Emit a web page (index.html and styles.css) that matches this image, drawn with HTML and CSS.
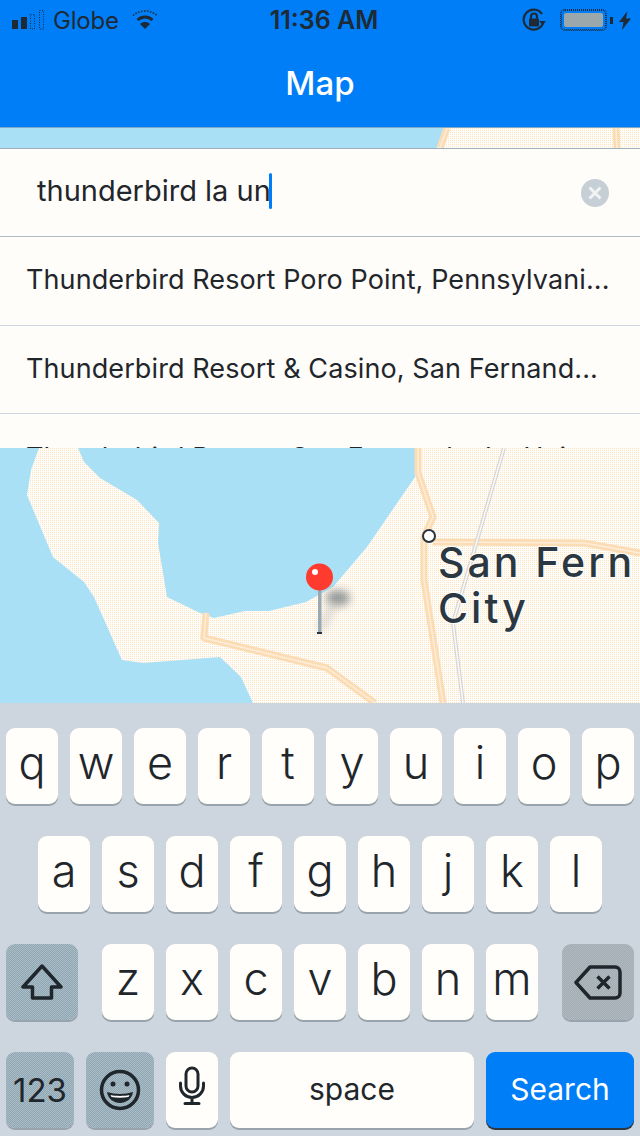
FILE: index.html
```html
<!doctype html>
<html lang="en">

<head>
	<meta charset="UTF-8">
	<title>Map</title>
	<link rel="stylesheet" href="styles.css">
</head>

<body>
	<header class="top">
		<div class="status">
			<div class="status-left">
				<svg class="signal" width="34" height="22" viewBox="0 0 34 22">
					<rect x="0" y="11" width="6" height="9" />
					<rect x="9" y="8" width="6" height="12" />
					<rect class="dotted" x="18.5" y="5.5" width="4" height="14.5" />
					<rect class="dotted" x="27.5" y="1.5" width="4" height="18.5" />
				</svg>
				<span class="carrier">Globe</span>
				<svg class="wifi" width="28" height="22" viewBox="0 0 28 22">
					<path class="wifi-outer" d="M2 6.5C9 .5 19 .5 26 6.5" />
					<path class="wifi-mid" d="M6.5 11C11 7 17 7 21.5 11" />
					<path class="wifi-low" d="M9 15C12 12.4 16 12.4 19 15L14 20Z" />
				</svg>
			</div>
			<span class="clock">11:36 AM</span>
			<div class="status-right">
				<svg class="rotlock" width="24" height="24" viewBox="0 0 24 24">
					<path class="ring" d="M21.5 13.5A10 10 0 1 1 20 6" />
					<path class="solid" d="M17 13h7l-3.5 4z" />
					<rect class="solid" x="7" y="10.5" width="10" height="8" rx="1" />
					<path class="shackle" d="M9 11V8.500a3 3 0 0 1 6 0V11" />
				</svg>
				<div class="battery"><div class="battery-fill"></div></div>
				<div class="battery-nub"></div>
				<svg class="bolt" width="12" height="19" viewBox="0 0 12 19">
					<path class="solid" d="M8.500 0L0 11h4.500L3 19l9-11.500H7z" />
				</svg>
			</div>
		</div>
		<h1 class="title">Map</h1>
	</header>

	<main class="stage">
		<svg class="map" viewBox="0 128 640 575" preserveAspectRatio="none">
			<defs>
				<pattern id="land" width="2" height="2" patternUnits="userSpaceOnUse">
					<rect width="2" height="2" fill="#fffdf9" />
					<rect width="1" height="1" fill="#fce3c2" />
				</pattern>
				<filter id="soft" x="-50%" y="-50%" width="200%" height="200%">
					<feGaussianBlur stdDeviation="4" />
				</filter>
			</defs>
			<rect class="water" x="0" y="128" width="640" height="575" />
			<path fill="url(#land)" d="M39 448L78 448L84 462L100 478L137 500L159 523L158 543L167 597L200 613L214 618L245 611L269 611L306 602L333 587L367 547L415 477L420 400L437 148L445 128L640 128L640 703L253 703L241 677L220 657L143 663L122 660L94 597L84 582L53 557L27 495L31 470Z" />

			<g class="road">
				<path d="M447 128L440 148M616 128L617 148" />
				<path d="M418 448L418 473L433 517L424 537L424 580L443 703" />
				<path d="M433 542L584 543L640 553" />
				<path d="M206 613L204 638L327 668L375 703" />
			</g>
			<g class="road-core">
				<path d="M447 128L440 148M616 128L617 148" />
				<path d="M418 448L418 473L433 517L424 537L424 580L443 703" />
				<path d="M433 542L584 543L640 553" />
				<path d="M206 613L204 638L327 668L375 703" />
			</g>
			<path class="rail" d="M504 448L453 623L463 703" />
			<path class="rail-core" d="M504 448L453 623L463 703" />

			<circle class="town" cx="429" cy="536" r="6" />
			<text class="place" x="438" y="577">San Fern</text>
			<text class="place" x="438" y="623">City</text>

			<ellipse class="pin-shadow" cx="338" cy="598" rx="12" ry="8" filter="url(#soft)" />
			<path class="pin-trail" d="M334 604L320 630" filter="url(#soft)" />
			<rect class="pin-stem" x="318" y="588" width="3.500" height="45" />
			<rect class="pin-tip" x="317" y="632" width="5" height="2" />
			<circle class="pin-head" cx="319.500" cy="577" r="13.500" />
			<circle class="pin-glint" cx="315" cy="572" r="3" />
		</svg>

		<section class="panel">
			<div class="search">
				<span class="query">thunderbird la un</span><span class="caret"></span>
				<svg class="clear" width="28" height="28" viewBox="0 0 28 28">
					<circle cx="14" cy="14" r="14" />
					<path d="M8.500 8.500L19.500 19.500M19.500 8.500L8.500 19.500" />
				</svg>
			</div>
			<div class="result">Thunderbird Resort Poro Point, Pennsylvani...</div>
			<div class="result">Thunderbird Resort &amp; Casino, San Fernand...</div>
			<div class="result">Thunderbird Resort, San Fernando, La Union</div>
		</section>
	</main>

	<section class="keyboard">
		<div class="row">
			<div class="key">q</div>
			<div class="key">w</div>
			<div class="key">e</div>
			<div class="key">r</div>
			<div class="key">t</div>
			<div class="key">y</div>
			<div class="key">u</div>
			<div class="key">i</div>
			<div class="key">o</div>
			<div class="key">p</div>
		</div>
		<div class="row row-center">
			<div class="key">a</div>
			<div class="key">s</div>
			<div class="key">d</div>
			<div class="key">f</div>
			<div class="key">g</div>
			<div class="key">h</div>
			<div class="key">j</div>
			<div class="key">k</div>
			<div class="key">l</div>
		</div>
		<div class="row row-third">
			<div class="key key-fn key-side">
				<svg class="ico" width="42" height="36" viewBox="0 0 42 36">
					<path d="M21 2L2 23H11.500V34H30.500V23H40Z" />
				</svg>
			</div>
			<div class="letters">
				<div class="key">z</div>
				<div class="key">x</div>
				<div class="key">c</div>
				<div class="key">v</div>
				<div class="key">b</div>
				<div class="key">n</div>
				<div class="key">m</div>
			</div>
			<div class="key key-del key-side">
				<svg class="ico" width="48" height="35" viewBox="0 0 48 35">
					<path d="M16 2H41a5 5 0 0 1 5 5V28a5 5 0 0 1-5 5H16L2 17.500Z" />
					<path d="M23.500 11.500L35.500 23.500M35.500 11.500L23.500 23.500" />
				</svg>
			</div>
		</div>
		<div class="row">
			<div class="key key-fn key-mode">123</div>
			<div class="key key-fn key-mode">
				<svg class="ico" width="42" height="42" viewBox="0 0 42 42">
					<circle cx="21" cy="21" r="18.500" />
					<circle class="fill" cx="14" cy="15" r="2.500" />
					<circle class="fill" cx="28" cy="15" r="2.500" />
					<path class="fill" d="M8 23C16 25.500 26 25.500 34 23C33 30 27 34 21 34C15 34 9 30 8 23Z" />
					<path class="teeth" d="M11.500 26C17 27.200 25 27.200 30.500 26L29.500 28C24 29 18 29 12.500 28Z" />
				</svg>
			</div>
			<div class="key">
				<svg class="ico" width="26" height="40" viewBox="0 0 26 40">
					<rect class="thin" x="7" y="2" width="12" height="24" rx="6" />
					<path class="thin" d="M1.500 17V20a11.500 11.500 0 0 0 23 0V17M13 31.500V37M6 37.500H20" />
				</svg>
			</div>
			<div class="key key-space">space</div>
			<div class="key key-go">Search</div>
		</div>
	</section>
</body>

</html>
```

FILE: styles.css
```css
* {
	box-sizing: border-box;
}

body {
	margin: 0;
	width: 640px;
	height: 1136px;
	overflow: hidden;
	display: flex;
	flex-direction: column;
	font-family: Inter, "Liberation Sans", sans-serif;
	color: #1f262c;
	background: #cdd5de;
}

/* top bar */
.top {
	height: 128px;
	flex: none;
	background: #007ef7;
	border-bottom: 1px solid #7fa9c6;
}

.status {
	height: 40px;
	padding: 0 9px 0 12px;
	display: flex;
	align-items: center;
	justify-content: space-between;
	color: #1e2a36;
	font-size: 24px;
}

.status-left,
.status-right {
	width: 186px;
	display: flex;
	align-items: center;
}

.status-right {
	justify-content: flex-end;
}

.carrier {
	margin-left: 7px;
	letter-spacing: -0.2px;
}

.clock {
	margin-left: 5px;
	font-size: 25px;
	font-weight: 600;
}

.signal rect {
	fill: #1e2a36;
}

.signal .dotted {
	fill: none;
	stroke: #1e2a36;
	stroke-width: 1;
	stroke-dasharray: 1 1.500;
}

.wifi {
	margin-left: 12px;
}

.wifi path {
	fill: none;
	stroke: #1e2a36;
}

.wifi .wifi-outer {
	stroke-width: 1.500;
	stroke-dasharray: 1.500 1.500;
}

.wifi .wifi-mid {
	stroke-width: 3;
}

.wifi .wifi-low {
	fill: #1e2a36;
	stroke: none;
}

.rotlock {
	margin-right: -1px;
}

.rotlock .ring,
.rotlock .shackle {
	fill: none;
	stroke: #1e2a36;
	stroke-width: 2.200;
}

.solid {
	fill: #1e2a36;
}

.battery {
	width: 47px;
	height: 22px;
	margin-left: 15px;
	padding: 3px;
	border: 1px dotted #1e2a36;
	outline: 1px dotted #1e2a36;
	outline-offset: -2px;
	border-radius: 5px;
}

.battery-fill {
	height: 100%;
	background: #9aa7ab;
	border-radius: 2px;
}

.battery-nub {
	width: 3px;
	height: 7px;
	margin-left: 3px;
	background: #1e2a36;
}

.bolt {
	margin-left: 6px;
}

.title {
	margin: 0;
	height: 87px;
	padding-bottom: 2px;
	display: flex;
	align-items: center;
	justify-content: center;
	color: #fff;
	font-size: 33px;
	font-weight: 500;
}

/* map and search panel */
.stage {
	flex: 1;
	position: relative;
	overflow: hidden;
}

.map {
	position: absolute;
	inset: 0;
	width: 100%;
	height: 100%;
}

.water {
	fill: #aae0f6;
}

.road,
.road-core,
.rail,
.rail-core {
	fill: none;
	stroke-linejoin: round;
}

.road {
	stroke: #fbdcb4;
	stroke-width: 7;
}

.road-core {
	stroke: #fdeeda;
	stroke-width: 1.500;
}

.rail {
	stroke: #d6d6d6;
	stroke-width: 4;
}

.rail-core {
	stroke: #fbfaf6;
	stroke-width: 1.500;
}

.town {
	fill: #fff;
	stroke: #27343d;
	stroke-width: 2;
}

.place {
	font-size: 41px;
	font-weight: 500;
	letter-spacing: 3px;
	fill: #2c3841;
	stroke: #fffdf9;
	stroke-width: 2px;
	paint-order: stroke;
}

.pin-shadow {
	fill: #7c8486;
	opacity: 0.8;
}

.pin-trail {
	stroke: #b9b9b4;
	stroke-width: 8;
	opacity: 0.5;
}

.pin-stem {
	fill: #9aa8b0;
}

.pin-tip {
	fill: #27343d;
}

.pin-head {
	fill: #ff3b30;
}

.pin-glint {
	fill: #fff;
}

.panel {
	position: relative;
	height: 300px;
	margin-top: 20px;
	overflow: hidden;
	background: #fffdf9;
	border-top: 1px solid #9fb0b9;
}

.search {
	height: 88px;
	padding: 0 31px 4px 37px;
	display: flex;
	align-items: center;
	border-bottom: 1px solid #b4bcc2;
	font-size: 29px;
}

.caret {
	width: 3px;
	height: 36px;
	margin-left: -2px;
	background: #007ef7;
	border-radius: 2px;
}

.clear {
	margin: 4px 0 0 auto;
}

.clear circle {
	fill: #c6ced6;
}

.clear path {
	fill: none;
	stroke: #f1f2f2;
	stroke-width: 3;
}

.result {
	height: 88.500px;
	padding: 0 26px 3px;
	display: flex;
	align-items: center;
	white-space: nowrap;
	border-bottom: 1px solid #ced6de;
	font-size: 27px;
	letter-spacing: 0.1px;
}

.result + .result {
	padding-bottom: 1px;
}

/* keyboard */
.keyboard {
	height: 433px;
	flex: none;
	padding: 25px 6px 8px;
	display: flex;
	flex-direction: column;
	gap: 32px;
	background: #cdd5de;
}

.row,
.letters {
	display: flex;
	gap: 12px;
}

.row-center {
	justify-content: center;
}

.row-third {
	justify-content: space-between;
}

.key {
	width: 52px;
	height: 76px;
	padding-bottom: 8px;
	display: flex;
	align-items: center;
	justify-content: center;
	background: #fffefa;
	border-radius: 9px;
	box-shadow: 0 2px 0 #98a4ad;
	font-size: 45px;
	font-weight: 300;
}

.key-fn {
	background: repeating-conic-gradient(#96a4ad 0 25%, #a4bfcc 0 50%) 0 0 / 2px 2px;
}

.key-del {
	background: repeating-conic-gradient(#a1abb2 0 25%, #b0bac0 0 50%) 0 0 / 2px 2px;
}

.key-side {
	width: 72px;
	padding-bottom: 0;
}

.key-mode {
	width: 68px;
	padding-bottom: 0;
	font-size: 33px;
	font-weight: 400;
}

.key-space {
	width: 244px;
	font-size: 30px;
	font-weight: 400;
	padding-bottom: 2px;
}

.key-go {
	width: 148px;
	background: #007ef7;
	color: #fff;
	font-size: 30px;
	font-weight: 400;
	padding-bottom: 2px;
	box-shadow: 0 2px 0 #2a3640;
}

.ico {
	fill: none;
	stroke: #1f262c;
	stroke-width: 3.500;
	stroke-linejoin: round;
}

.ico .thin {
	stroke-width: 3;
	stroke-linecap: round;
}

.ico .fill {
	fill: #1f262c;
	stroke: none;
}

.ico .teeth {
	fill: #fffefa;
	stroke: none;
}
```
